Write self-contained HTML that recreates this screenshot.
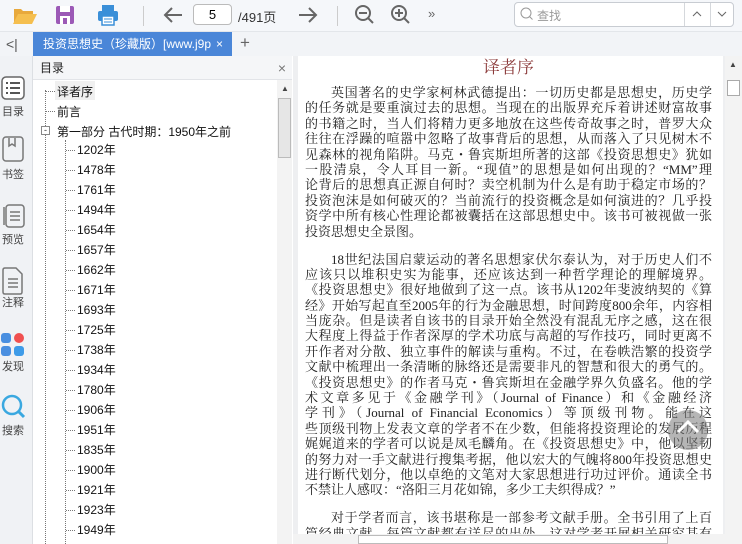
<!DOCTYPE html>
<html><head><meta charset="utf-8"><style>
*{margin:0;padding:0;box-sizing:border-box}
body{width:742px;height:544px;overflow:hidden;background:#fff;font-family:"Liberation Sans","Noto Sans CJK SC",sans-serif;position:relative}
.abs{position:absolute}
#tb{left:0;top:0;width:742px;height:32px;background:#f5f7fa;border-bottom:1px solid #e3e6ea}
#tabs{left:0;top:32px;width:742px;height:24px;background:#f2f4f7}
#tab{left:33px;top:32px;width:199px;height:24px;background:#4a86d8;color:#fff;font-size:12px;line-height:24px;padding-left:10px;white-space:nowrap;overflow:hidden}
#side{left:0;top:56px;width:33px;height:488px;background:#f0f2f5;border-right:1px solid #dcdfe3}
.sl{position:absolute;left:0;width:26px;text-align:center;font-size:11px;color:#444}
#toc{left:33px;top:56px;width:259px;height:488px;background:#fff;border-right:1px solid #d8dbe0}
#toch{left:33px;top:56px;width:259px;height:24px;background:#f5f6f8;border-bottom:1px solid #e2e4e8;font-size:12px;line-height:24px;padding-left:7px;color:#222}
.ti{position:absolute;font-size:12px;color:#111;white-space:nowrap}
.dl{position:absolute;border-top:1px dotted #777;width:9px}
#main{left:293px;top:56px;width:449px;height:488px;background:#eeeff1}
#page{left:298px;top:56px;width:425px;height:488px;background:#fff}
.txt{position:absolute;left:305px;width:407px;font-family:"Liberation Serif","Noto Serif CJK SC",serif;font-size:13px;line-height:15.4px;color:#222}
.txt div{text-align:justify;text-align-last:justify;white-space:nowrap;height:15.4px}
.txt div.e{text-align-last:left}
.txt div.i{padding-left:26px}
.gap{height:12.6px!important}
</style></head><body>
<div id="tb" class="abs">
<svg class="abs" style="left:12px;top:4px" width="26" height="22"><path d="M2 5h7l2 2h10v3H8L2 19z" fill="#e8a93c"/><path d="M6 10h19l-5 10H1z" fill="#f5bf4f"/></svg>
<svg class="abs" style="left:55px;top:5px" width="20" height="20"><rect x="1" y="1" width="18" height="18" rx="2" fill="#9b59b6"/><rect x="5" y="1" width="10" height="6" fill="#fff"/><rect x="5" y="11" width="10" height="8" fill="#fff"/><rect x="8" y="13" width="4" height="6" fill="#9b59b6"/></svg>
<svg class="abs" style="left:97px;top:4px" width="22" height="22"><rect x="5" y="1" width="12" height="6" fill="#3a8fd8"/><rect x="1" y="7" width="20" height="10" rx="2" fill="#3a8fd8"/><rect x="5" y="12" width="12" height="9" fill="#fff" stroke="#3a8fd8" stroke-width="1.5"/><path d="M7 15h8M7 18h8" stroke="#3a8fd8"/></svg>
<div class="abs" style="left:143px;top:6px;width:1px;height:20px;background:#ccc"></div>
<svg class="abs" style="left:162px;top:5px" width="22" height="20"><path d="M20 10H3M10 3L3 10l7 7" stroke="#666" stroke-width="2" fill="none"/></svg>
<div class="abs" style="left:193px;top:4px;width:39px;height:21px;border:1px solid #bbb;border-radius:4px;background:#fff;font-size:13px;text-align:center;line-height:19px">5</div>
<div class="abs" style="left:238px;top:7px;font-size:13px;color:#333">/491页</div>
<svg class="abs" style="left:297px;top:5px" width="22" height="20"><path d="M2 10h17M12 3l7 7-7 7" stroke="#666" stroke-width="2" fill="none"/></svg>
<div class="abs" style="left:337px;top:6px;width:1px;height:20px;background:#ccc"></div>
<svg class="abs" style="left:354px;top:4px" width="22" height="22"><circle cx="9" cy="9" r="7" stroke="#666" stroke-width="2" fill="none"/><path d="M5 9h8M14 14l5 5" stroke="#666" stroke-width="2"/></svg>
<svg class="abs" style="left:390px;top:4px" width="22" height="22"><circle cx="9" cy="9" r="7" stroke="#666" stroke-width="2" fill="none"/><path d="M5 9h8M9 5v8M14 14l5 5" stroke="#666" stroke-width="2"/></svg>
<div class="abs" style="left:428px;top:6px;font-size:13px;color:#666">»</div>
<div class="abs" style="left:514px;top:2px;width:220px;height:25px;border:1px solid #c8ccd2;border-radius:4px;background:#fff"></div>
<svg class="abs" style="left:520px;top:7px" width="14" height="14"><circle cx="6" cy="6" r="5" stroke="#999" fill="none"/><path d="M9.5 9.5l3 3" stroke="#999"/></svg>
<div class="abs" style="left:537px;top:7px;font-size:12px;color:#999">查找</div>
<div class="abs" style="left:684px;top:3px;width:1px;height:23px;background:#d5d8dc"></div>
<div class="abs" style="left:710px;top:3px;width:1px;height:23px;background:#d5d8dc"></div>
<svg class="abs" style="left:692px;top:11px" width="10" height="6"><path d="M1 5l4-4 4 4" stroke="#666" fill="none"/></svg>
<svg class="abs" style="left:717px;top:11px" width="10" height="6"><path d="M1 1l4 4 4-4" stroke="#666" fill="none"/></svg>
</div>
<div id="tabs" class="abs"></div>
<div class="abs" style="left:6px;top:36px;font-size:14px;color:#555">&lt;|</div>
<div id="tab" class="abs">投资思想史（珍藏版）[www.j9p<span style="position:absolute;left:183px">×</span></div>
<div class="abs" style="left:240px;top:33px;font-size:17px;color:#666">+</div>
<div id="side" class="abs">
<svg class="abs" style="left:1px;top:20px" width="24" height="24"><rect x="1" y="1" width="22" height="22" rx="4" stroke="#666" stroke-width="1.5" fill="#fff"/><path d="M5 7h2M9 7h10M5 12h2M9 12h10M5 17h2M9 17h10" stroke="#555" stroke-width="2"/></svg>
<div class="sl" style="top:47px">目录</div>
<svg class="abs" style="left:2px;top:80px" width="22" height="26"><rect x="1" y="1" width="20" height="24" rx="3" stroke="#777" stroke-width="1.5" fill="none"/><path d="M7 2v8l3-2 3 2V2" stroke="#777" stroke-width="1.5" fill="none"/></svg>
<div class="sl" style="top:110px">书签</div>
<svg class="abs" style="left:1px;top:146px" width="24" height="26"><rect x="5" y="3" width="18" height="22" rx="3" stroke="#777" stroke-width="1.5" fill="#f0f2f5"/><path d="M3 5v18M9 10h10M9 14h10M9 18h10" stroke="#777" stroke-width="1.5"/></svg>
<div class="sl" style="top:175px">预览</div>
<svg class="abs" style="left:2px;top:211px" width="22" height="28"><path d="M1 3q0-2 2-2h11l6 6v18q0 2-2 2H3q-2 0-2-2z" stroke="#777" stroke-width="1.5" fill="none"/><path d="M6 12h10M6 16h10M6 20h10" stroke="#777" stroke-width="1.5"/></svg>
<div class="sl" style="top:238px">注释</div>
<div class="abs" style="left:1px;top:277px;width:10px;height:10px;border-radius:3px;background:#4a8fe0"></div>
<div class="abs" style="left:14px;top:277px;width:10px;height:10px;border-radius:5px;background:#f05050"></div>
<div class="abs" style="left:1px;top:290px;width:10px;height:10px;border-radius:3px;background:#4a8fe0"></div>
<div class="abs" style="left:14px;top:290px;width:10px;height:10px;border-radius:3px;background:#3e9be8"></div>
<div class="sl" style="top:302px">发现</div>
<svg class="abs" style="left:1px;top:338px" width="26" height="26"><circle cx="11" cy="11" r="9" stroke="#3aa8e0" stroke-width="2.5" fill="none"/><path d="M17 17l6 6" stroke="#3aa8e0" stroke-width="3"/></svg>
<div class="sl" style="top:366px">搜索</div>
</div>
<div id="toc" class="abs"></div>
<div id="toch" class="abs">目录<span style="position:absolute;right:6px;color:#777;font-size:14px">×</span></div>
<div class="abs" style="left:277px;top:80px;width:15px;height:464px;background:#f3f3f3"></div>
<div class="abs" style="left:278px;top:98px;width:13px;height:60px;background:#e6e6e6;border:1px solid #bbb"></div>
<div class="abs" style="left:281px;top:84px;font-size:8px;color:#444">▲</div>
<div class="abs" style="left:45px;top:90px;height:454px;border-left:1px dotted #777"></div>
<div class="abs" style="left:65px;top:140px;height:404px;border-left:1px dotted #777"></div>
<div class="abs" style="left:55px;top:81px;width:40px;height:19px;background:#f0f0f0"></div>
<div class="dl" style="left:46px;top:91px"></div><div class="ti" style="left:57px;top:83px">译者序</div>
<div class="dl" style="left:46px;top:111px"></div><div class="ti" style="left:57px;top:103px">前言</div>
<div class="abs" style="left:41px;top:126px;width:9px;height:9px;border:1px solid #888;background:#fff;font-size:9px;line-height:7px;text-align:center;color:#333">-</div>
<div class="ti" style="left:57px;top:123px">第一部分 古代时期：1950年之前</div>
<div class="abs" style="left:66px;top:150px">
<div class="dl" style="left:0;top:0"></div><div class="dl" style="left:0;top:20px"></div><div class="dl" style="left:0;top:40px"></div><div class="dl" style="left:0;top:60px"></div><div class="dl" style="left:0;top:80px"></div><div class="dl" style="left:0;top:100px"></div><div class="dl" style="left:0;top:120px"></div><div class="dl" style="left:0;top:140px"></div><div class="dl" style="left:0;top:160px"></div><div class="dl" style="left:0;top:180px"></div><div class="dl" style="left:0;top:200px"></div><div class="dl" style="left:0;top:220px"></div><div class="dl" style="left:0;top:240px"></div><div class="dl" style="left:0;top:260px"></div><div class="dl" style="left:0;top:280px"></div><div class="dl" style="left:0;top:300px"></div><div class="dl" style="left:0;top:320px"></div><div class="dl" style="left:0;top:340px"></div><div class="dl" style="left:0;top:360px"></div><div class="dl" style="left:0;top:380px"></div>
</div>
<div class="ti" style="left:77px;top:140px;line-height:20px">
<div>1202年</div><div>1478年</div><div>1761年</div><div>1494年</div><div>1654年</div><div>1657年</div><div>1662年</div><div>1671年</div><div>1693年</div><div>1725年</div><div>1738年</div><div>1934年</div><div>1780年</div><div>1906年</div><div>1951年</div><div>1835年</div><div>1900年</div><div>1921年</div><div>1923年</div><div>1949年</div></div>
<div id="main" class="abs"></div>
<div id="page" class="abs"></div>
<div class="abs" style="left:725px;top:56px;width:17px;height:488px;background:#f3f3f3"></div>
<div class="abs" style="left:729px;top:60px;font-size:8px;color:#444">▲</div>
<div class="abs" style="left:727px;top:80px;width:13px;height:16px;background:#fff;border:1px solid #aaa"></div>
<div class="abs" style="left:483px;top:53px;font-family:'Liberation Serif','Noto Serif CJK SC',serif;font-size:17px;color:#8b3a3a">译者序</div>
<div class="txt" style="top:85px">
<div class="i">英国著名的史学家柯林武德提出：一切历史都是思想史，历史学</div>
<div>的任务就是要重演过去的思想。当现在的出版界充斥着讲述财富故事</div>
<div>的书籍之时，当人们将精力更多地放在这些传奇故事之时，普罗大众</div>
<div>往往在浮躁的喧嚣中忽略了故事背后的思想，从而落入了只见树木不</div>
<div>见森林的视角陷阱。马克・鲁宾斯坦所著的这部《投资思想史》犹如</div>
<div>一股清泉，令人耳目一新。“现值”的思想是如何出现的？“MM”理</div>
<div>论背后的思想真正源自何时？卖空机制为什么是有助于稳定市场的？</div>
<div>投资泡沫是如何破灭的？当前流行的投资概念是如何演进的？几乎投</div>
<div>资学中所有核心性理论都被囊括在这部思想史中。该书可被视做一张</div>
<div class="e">投资思想史全景图。</div>
<div class="gap"></div>
<div class="i">18世纪法国启蒙运动的著名思想家伏尔泰认为，对于历史人们不</div>
<div>应该只以堆积史实为能事，还应该达到一种哲学理论的理解境界。</div>
<div>《投资思想史》很好地做到了这一点。该书从1202年斐波纳契的《算</div>
<div>经》开始写起直至2005年的行为金融思想，时间跨度800余年，内容相</div>
<div>当庞杂。但是读者自该书的目录开始全然没有混乱无序之感，这在很</div>
<div>大程度上得益于作者深厚的学术功底与高超的写作技巧，同时更离不</div>
<div>开作者对分散、独立事件的解读与重构。不过，在卷帙浩繁的投资学</div>
<div>文献中梳理出一条清晰的脉络还是需要非凡的智慧和很大的勇气的。</div>
<div>《投资思想史》的作者马克・鲁宾斯坦在金融学界久负盛名。他的学</div>
<div>术文章多见于《金融学刊》（Journal of Finance）和《金融经济</div>
<div>学刊》（Journal of Financial Economics）等顶级刊物。能在这</div>
<div>些顶级刊物上发表文章的学者不在少数，但能将投资理论的发展历程</div>
<div>娓娓道来的学者可以说是凤毛麟角。在《投资思想史》中，他以坚韧</div>
<div>的努力对一手文献进行搜集考据，他以宏大的气魄将800年投资思想史</div>
<div>进行断代划分，他以卓绝的文笔对大家思想进行功过评价。通读全书</div>
<div class="e">不禁让人感叹：“洛阳三月花如锦，多少工夫织得成？”</div>
<div class="gap"></div>
<div class="i">对于学者而言，该书堪称是一部参考文献手册。全书引用了上百</div>
<div>篇经典文献，每篇文献都有详尽的出处，这对学者开展相关研究甚有</div>
</div>
<div class="abs" style="left:293px;top:534px;width:432px;height:10px;background:#f3f3f3"></div>
<div class="abs" style="left:358px;top:535px;width:310px;height:9px;background:#fff;border:1px solid #bbb"></div>
<div class="abs" style="left:668px;top:410px;width:40px;height:40px;border-radius:20px;background:rgba(120,120,120,.55)"></div>
<svg class="abs" style="left:676px;top:418px" width="24" height="16"><path d="M2 14L12 4l10 10" stroke="#fff" stroke-width="3" fill="none"/></svg>
</body></html>
